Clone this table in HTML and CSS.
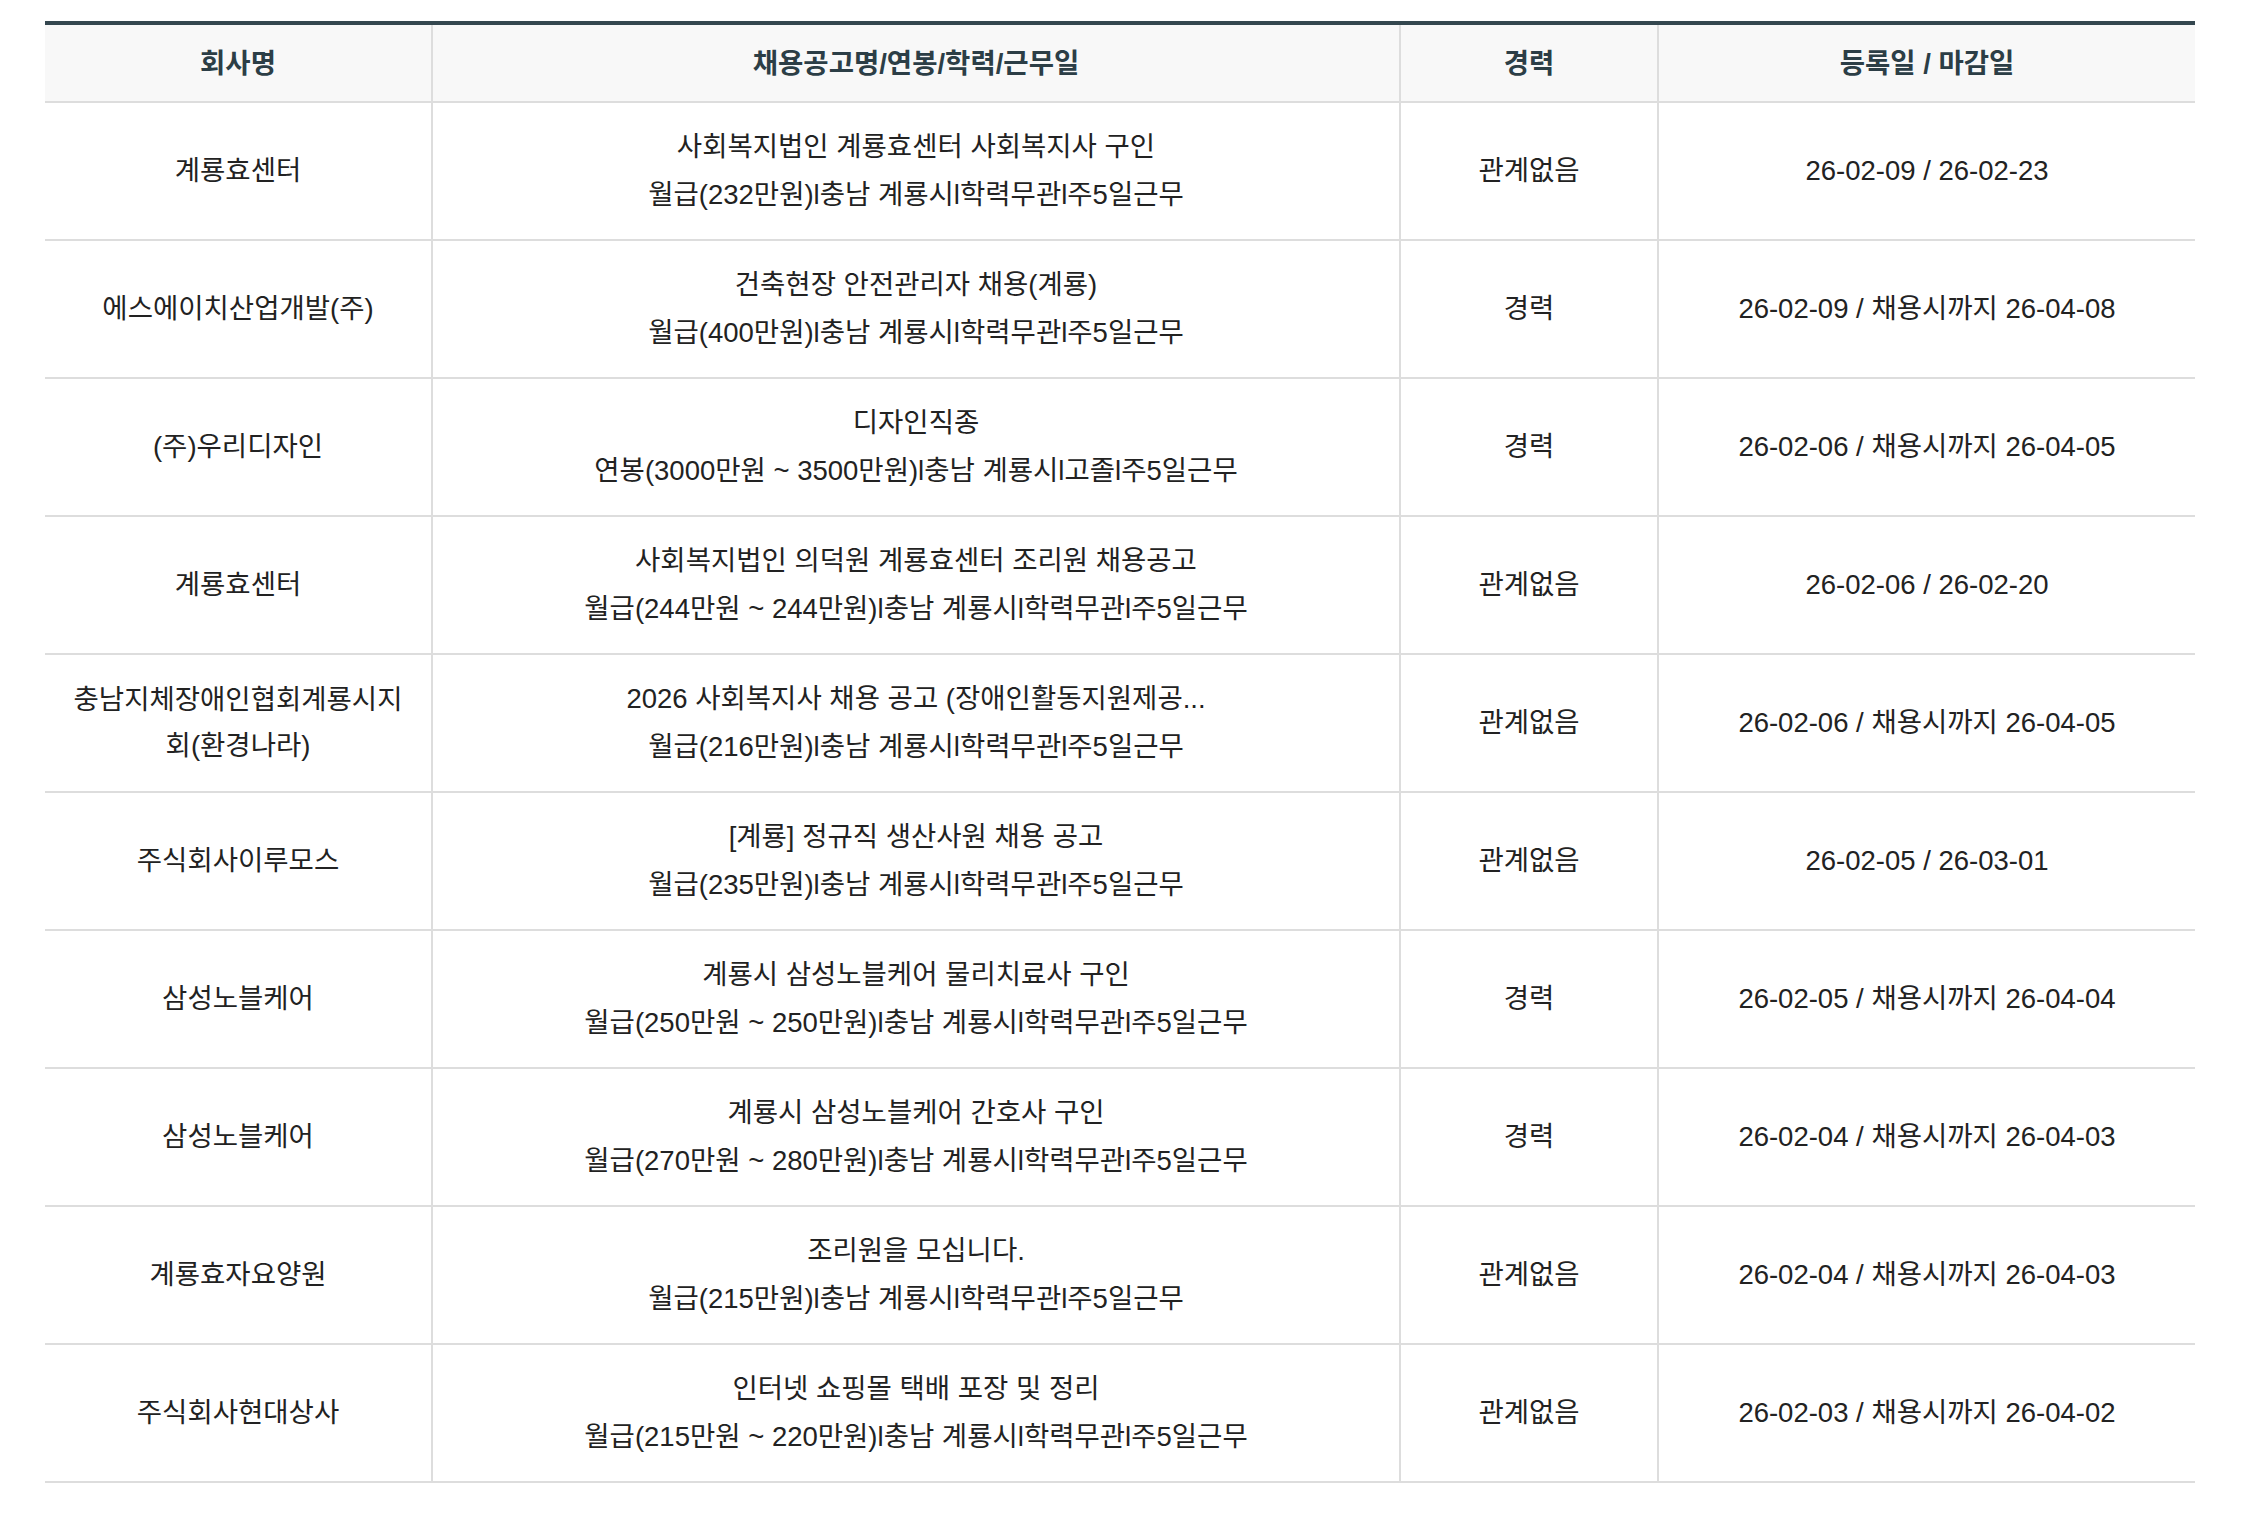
FILE: index.html
```html
<!DOCTYPE html>
<html lang="ko">
<head>
<meta charset="utf-8">
<title>채용공고 목록</title>
<link rel="stylesheet" href="styles.css">
</head>
<body>
<div class="wrap">
<table class="jobs">
  <colgroup>
    <col class="c-company">
    <col class="c-title">
    <col class="c-career">
    <col class="c-date">
  </colgroup>
  <thead>
    <tr>
      <th>회사명</th>
      <th>채용공고명/연봉/학력/근무일</th>
      <th>경력</th>
      <th>등록일 / 마감일</th>
    </tr>
  </thead>
  <tbody>
    <tr>
      <td class="company">계룡효센터</td>
      <td class="info"><div>사회복지법인 계룡효센터 사회복지사 구인</div><div>월급(232만원)l충남 계룡시l학력무관l주5일근무</div></td>
      <td>관계없음</td>
      <td>26-02-09 / 26-02-23</td>
    </tr>
    <tr>
      <td class="company">에스에이치산업개발(주)</td>
      <td class="info"><div>건축현장 안전관리자 채용(계룡)</div><div>월급(400만원)l충남 계룡시l학력무관l주5일근무</div></td>
      <td>경력</td>
      <td>26-02-09 / 채용시까지 26-04-08</td>
    </tr>
    <tr>
      <td class="company">(주)우리디자인</td>
      <td class="info"><div>디자인직종</div><div>연봉(3000만원 ~ 3500만원)l충남 계룡시l고졸l주5일근무</div></td>
      <td>경력</td>
      <td>26-02-06 / 채용시까지 26-04-05</td>
    </tr>
    <tr>
      <td class="company">계룡효센터</td>
      <td class="info"><div>사회복지법인 의덕원 계룡효센터 조리원 채용공고</div><div>월급(244만원 ~ 244만원)l충남 계룡시l학력무관l주5일근무</div></td>
      <td>관계없음</td>
      <td>26-02-06 / 26-02-20</td>
    </tr>
    <tr>
      <td class="company">충남지체장애인협회계룡시지회(환경나라)</td>
      <td class="info"><div>2026 사회복지사 채용 공고 (장애인활동지원제공...</div><div>월급(216만원)l충남 계룡시l학력무관l주5일근무</div></td>
      <td>관계없음</td>
      <td>26-02-06 / 채용시까지 26-04-05</td>
    </tr>
    <tr>
      <td class="company">주식회사이루모스</td>
      <td class="info"><div>[계룡] 정규직 생산사원 채용 공고</div><div>월급(235만원)l충남 계룡시l학력무관l주5일근무</div></td>
      <td>관계없음</td>
      <td>26-02-05 / 26-03-01</td>
    </tr>
    <tr>
      <td class="company">삼성노블케어</td>
      <td class="info"><div>계룡시 삼성노블케어 물리치료사 구인</div><div>월급(250만원 ~ 250만원)l충남 계룡시l학력무관l주5일근무</div></td>
      <td>경력</td>
      <td>26-02-05 / 채용시까지 26-04-04</td>
    </tr>
    <tr>
      <td class="company">삼성노블케어</td>
      <td class="info"><div>계룡시 삼성노블케어 간호사 구인</div><div>월급(270만원 ~ 280만원)l충남 계룡시l학력무관l주5일근무</div></td>
      <td>경력</td>
      <td>26-02-04 / 채용시까지 26-04-03</td>
    </tr>
    <tr>
      <td class="company">계룡효자요양원</td>
      <td class="info"><div>조리원을 모십니다.</div><div>월급(215만원)l충남 계룡시l학력무관l주5일근무</div></td>
      <td>관계없음</td>
      <td>26-02-04 / 채용시까지 26-04-03</td>
    </tr>
    <tr>
      <td class="company">주식회사현대상사</td>
      <td class="info"><div>인터넷 쇼핑몰 택배 포장 및 정리</div><div>월급(215만원 ~ 220만원)l충남 계룡시l학력무관l주5일근무</div></td>
      <td>관계없음</td>
      <td>26-02-03 / 채용시까지 26-04-02</td>
    </tr>
  </tbody>
</table>
</div>
</body>
</html>
```
FILE: styles.css
```css
html, body {
  margin: 0;
  padding: 0;
  background: #ffffff;
}

.wrap {
  padding: 21px 0 0 45px;
}

.jobs {
  width: 2150px;
  table-layout: fixed;
  border-collapse: collapse;
  border-top: 4px solid #34474f;
  font-family: "Liberation Sans", "Noto Sans CJK KR", sans-serif;
  font-size: 27.5px;
  color: #222222;
  text-align: center;
}

.c-company { width: 387px; }
.c-title { width: 968px; }
.c-career { width: 258px; }
.c-date { width: 537px; }

.jobs th {
  height: 72px;
  padding: 0 20px 4px;
  background: #f8f8f8;
  color: #2c3e46;
  font-weight: 700;
  border-bottom: 2px solid #dddddd;
  border-left: 2px solid #dddddd;
}

.jobs td {
  height: 136px;
  padding: 0 20px;
  border-bottom: 2px solid #dddddd;
  border-left: 2px solid #dddddd;
  vertical-align: middle;
  line-height: 46px;
}

.jobs th:first-child,
.jobs td:first-child {
  border-left: none;
}

.jobs td.info div {
  line-height: 48px;
}
```
